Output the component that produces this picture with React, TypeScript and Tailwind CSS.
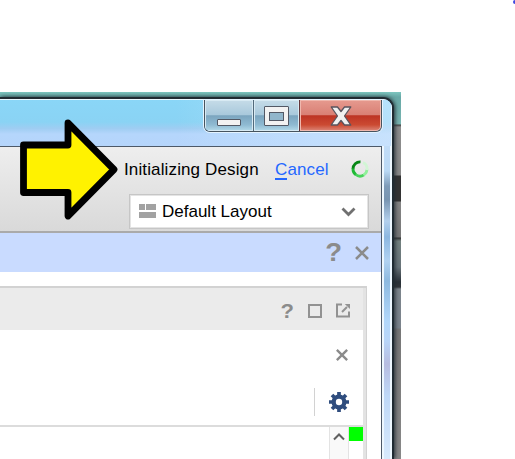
import type { ReactNode } from "react";

function CaptionButtons() {
  return (
    <div className="ml-[204px] flex h-[32px] w-[178px] overflow-hidden rounded-b-[6px] border border-t-0 border-[#46545f] shadow-[0_0_0_1px_#e4f3ff]">
      <div className="flex w-[49px] justify-center border-r border-[#526a7b] bg-[linear-gradient(#c6dce8_0%,#a9c9dc_47%,#7ba5bf_51%,#8fbad2_80%,#b5dbea_100%)] pt-[19px] shadow-[inset_0_0_0_1px_#d8eaf3]">
        <div className="h-[7px] w-[24px] rounded-[1px] border border-[#535965] bg-[#f2f2f2]" />
      </div>
      <div className="flex w-[46px] justify-center border-r border-[#64363a] bg-[linear-gradient(#c6dce8_0%,#a9c9dc_47%,#7ba5bf_51%,#8fbad2_80%,#b5dbea_100%)] pt-[6px] shadow-[inset_0_0_0_1px_#d8eaf3]">
        <div className="flex h-[20px] w-[25px] items-center justify-center rounded-[1px] border border-[#535965] bg-[#f2f2f2]">
          <div className="h-[9px] w-[15px] border border-[#535965] bg-[#91b6cb]" />
        </div>
      </div>
      <div className="flex flex-1 justify-center rounded-br-[5px] bg-[linear-gradient(#e69a8f_0%,#d98075_47%,#bd3424_51%,#cb4a32_80%,#dc887a_100%)] pt-[6px] shadow-[inset_0_0_0_1px_#efb8ae]">
        <svg width="22" height="20" viewBox="0 0 22 20">
          <path d="M1.200 1h6.300L11 5.500 14.500 1h6.300l-6.300 9 6.300 9h-6.300L11 14.500 7.500 19H1.200l6.300-9z" fill="#f0f0f0" stroke="#59545e" strokeWidth="1.3" strokeLinejoin="round" />
        </svg>
      </div>
    </div>
  );
}

function Cross({ size, width }: { size: number; width: number }) {
  return (
    <svg width={size} height={size} viewBox="0 0 14 14">
      <path d="M1 1l12 12M13 1L1 13" stroke="#8b8b8b" strokeWidth={width} />
    </svg>
  );
}

function Question({ children }: { children: ReactNode }) {
  return <span className="inline-block scale-x-110 font-bold leading-none text-[#8b8b8b]">{children}</span>;
}

function Spinner() {
  return (
    <svg className="-mt-[3px] ml-[21px]" width="18" height="18" viewBox="0 0 18 18" fill="none" strokeWidth="2.8">
      <path d="M9.500 1.900A7.100 7.100 0 0 0 2 9" stroke="#078615" />
      <path d="M2 8.500A7.100 7.100 0 0 0 5 14.800" stroke="#20b936" />
      <path d="M4.600 14.500A7.100 7.100 0 0 0 13 14.800" stroke="#48d35b" />
      <path d="M12.500 15.100A7.100 7.100 0 0 0 16 9.500" stroke="#90f09a" />
      <path d="M16 10A7.100 7.100 0 0 0 12 2.600" stroke="#d2f5d5" />
    </svg>
  );
}

function Toolbar() {
  return (
    <div className="h-[86px] border-b-2 border-[#aaa] bg-gradient-to-b from-[#eeeeee] to-[#d9d9d9] pt-[11px] text-[17px] leading-[24px] text-black">
      <div className="flex h-[24px] items-center whitespace-nowrap pl-[124px]">
        <span className="w-[151px] tracking-[0.13px]">Initializing Design</span>
        <span className="w-[55px] tracking-[0.13px] text-[#2467ff]">
          <span className="inline-block h-[22px] border-b-2 border-[#2467ff] leading-[24px]">C</span>ancel
        </span>
        <Spinner />
      </div>
      <div className="ml-[129px] mt-[12px] flex h-[35px] w-[240px] items-center border border-[#c6c6c6] bg-white pl-[9px] pr-[12px] shadow-[inset_0_0_0_1px_#e4e4e4]">
        <div className="grid w-[17px] grid-cols-[6px_10px] gap-x-[1px] gap-y-[2px] pb-[2px]">
          <i className="h-[6px] bg-[#a2a2a2]" />
          <i className="h-[6px] bg-[#a2a2a2]" />
          <i className="col-span-2 h-[6px] bg-[#a2a2a2]" />
        </div>
        <span className="ml-[6px] flex-1 whitespace-nowrap">Default Layout</span>
        <svg width="15" height="10" viewBox="0 0 15 10" fill="none" stroke="#707070" strokeWidth="2.800"><path d="M1.500 1.500l6 6 6-6" /></svg>
      </div>
    </div>
  );
}

function Panel() {
  return (
    <div className="mt-[14px] h-[174px] w-[367px] border-r border-t-2 border-[#d2d2d2]">
      <div className="h-[172px] border-r-[3px] border-[#e3e3e3]">
        <div className="flex h-[42px] items-center bg-[#ebebeb] pl-[281px] pt-[3px] text-[20px]">
          <Question>?</Question>
          <div className="ml-[15px] h-[14px] w-[14px] border-2 border-[#929292]" />
          <svg className="ml-[14px]" width="15" height="15" viewBox="0 0 15 15" fill="none" stroke="#929292" strokeWidth="2">
            <path d="M6 1.500H1v12h12V8.500" /><path d="M6 9l5-5" /><path d="M8.800 1H14v5z" fill="#929292" stroke="none" />
          </svg>
        </div>
        <div className="flex h-[49px] items-center pl-[336px]"><Cross size={12} width={2.800} /></div>
        <div className="flex h-[46px] items-center pl-[314px]">
          <div className="h-[28px] w-px bg-[#d2d2d2]" />
          <svg className="ml-[14px]" width="20" height="20" viewBox="0 0 20 20">
            <g stroke="#2f4d7e" strokeWidth="3.700"><path d="M10 0v20M0 10h20M3 3l14 14M17 3L3 17" /></g>
            <circle cx="10" cy="10" r="7.500" fill="#2f4d7e" />
            <circle cx="10" cy="10" r="3.200" fill="white" />
          </svg>
        </div>
        <div className="flex h-[35px] justify-end border-t-2 border-[#dcdcdc]">
          <div className="flex w-[20px] justify-center border-x border-[#e3e3e3] bg-[#f9f9f9] pt-[6px]">
            <svg width="12" height="8" viewBox="0 0 12 8" fill="none" stroke="#606060" strokeWidth="2"><path d="M1 6.500l5-5 5 5" /></svg>
          </div>
          <div className="h-[14px] w-[14px] bg-[#00ff00]" />
        </div>
      </div>
    </div>
  );
}

export default function App() {
  return (
    <div className="relative h-[459px] w-[515px] overflow-hidden bg-white pt-[92px] font-['Liberation_Sans',Arial,sans-serif]">
      <div className="h-[367px] w-[401px] overflow-hidden bg-[linear-gradient(#7dc5bf_0px,#68a9a7_5px,#79b4b1_32px,#444_33px,#8d8d8d_35px,#888_83px,#333_84px,#333_109px,#858585_110px,#777_145px,#333_146px,#73817f_149px,#69747a_175px,#293138_190px,#30353a_195px,#7c858c_197px,#7b838c_236px,#777_237px,#888_367px)] pt-[5px]">
        <div className="h-[362px] w-[394px] overflow-hidden rounded-tr-[11px] border-r-2 border-t-2 border-[#202b32] bg-[#b7d7f5] shadow-[1px_0_4px_#202b32]">
          <div className="h-[47px] border-r border-t border-[#eaf8ff] bg-[linear-gradient(90deg,transparent_0%,transparent_45%,#d4eafe99_100%),linear-gradient(#8ad6f7_0%,#8ad3f4_48%,#9fcdf2_62%,#b5d6fc_74%,#b5d5fb_100%)]">
            <CaptionButtons />
          </div>
          <div className="flex h-[313px]">
            <div className="w-[382px] border-r border-t border-[#4d5968] bg-white">
              <Toolbar />
              <div className="flex h-[39px] items-center bg-[#c9dbff] pl-[326px] text-[25px]">
                <Question>?</Question>
                <span className="ml-[14px]"><Cross size={14} width={2.500} /></span>
              </div>
              <Panel />
            </div>
            <div className="flex-1 border-x-2 border-[#eef8ff] bg-[linear-gradient(#c1dcf7_0px,#bad9f5_25px,#7f9cb9_40px,#7895b2_54px,#b3d0ed_75px,#8cb7e0_91px,#b1d2f1_115px,#8db9df_135px,#b1d7fb_175px,#b8d5f8_195px,#b6bce0_218px,#bed8f7_250px,#d7e9fc_313px)]" />
          </div>
        </div>
      </div>
      <svg className="absolute left-[17px] top-[117px]" width="102" height="106" viewBox="0 0 102 106">
        <path d="M6.500 28H51V6L97 52.500 51 99V75.500H6.500z" fill="#fff200" stroke="#000" strokeWidth="6.800" strokeLinejoin="round" />
      </svg>
      <div className="absolute right-0 top-0 h-[4px] w-[2px] rounded-l-full bg-[#3f48df]" />
    </div>
  );
}
